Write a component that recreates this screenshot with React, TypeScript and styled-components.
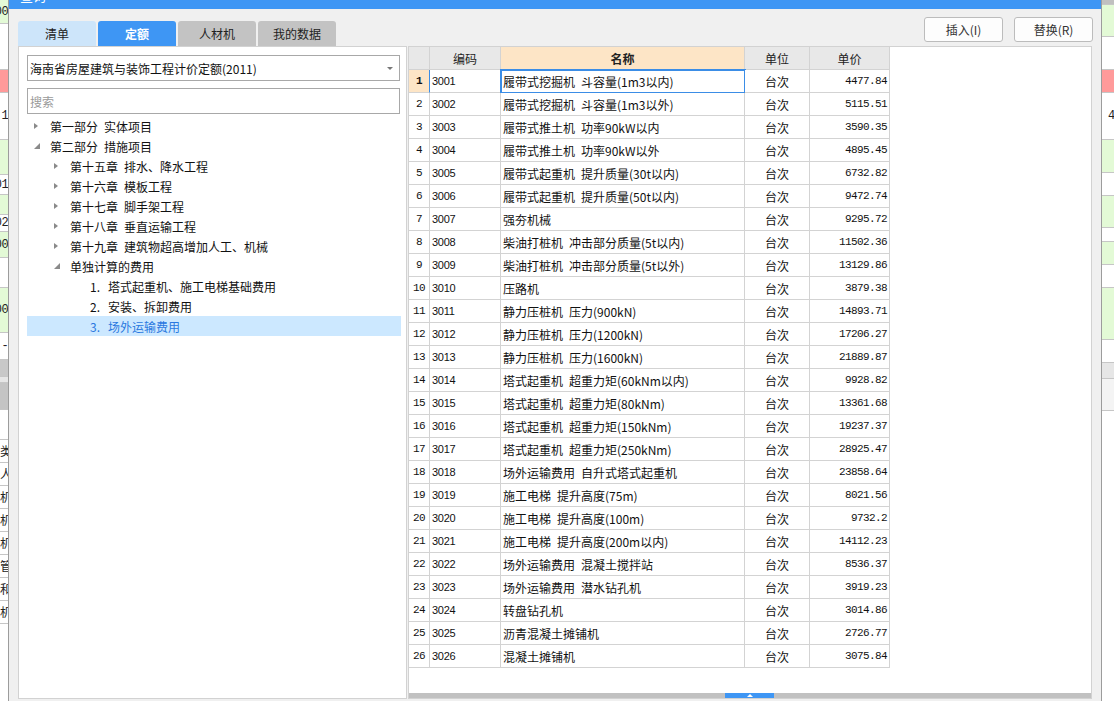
import React from 'react';
import styled, { createGlobalStyle } from 'styled-components';

const CJK = `"Noto Sans CJK SC", "Microsoft YaHei", sans-serif`;
const BLUE = '#3e96f4';

const GlobalStyle = createGlobalStyle`
  html, body { margin: 0; padding: 0; background: #f0f0f0; overflow: hidden; }
  * { box-sizing: border-box; }
`;

const Screen = styled.div`
  width: 1114px;
  height: 701px;
  display: flex;
  overflow: hidden;
  font-family: ${CJK};
  font-size: 12px;
  color: #1a1a1a;
`;

/* ---------- background window strips ---------- */
const BackStrip = styled.div<{ $w: number }>`
  width: ${p => p.$w}px;
  flex: none;
  display: flex;
  flex-direction: column;
  background: #fff;
  overflow: hidden;
`;

const BackCell = styled.div<{ $h: number; $bg: string; $side: 'left' | 'right'; $pad?: number }>`
  height: ${p => p.$h}px;
  flex: none;
  background: ${p => p.$bg};
  border-bottom: 1px solid #c6c6c6;
  display: flex;
  align-items: center;
  justify-content: ${p => (p.$side === 'right' ? 'flex-end' : 'flex-start')};
  padding-left: ${p => p.$pad ?? 0}px;
  font-family: "Liberation Mono", ${CJK};
  font-size: 12px;
  letter-spacing: -0.6px;
  white-space: nowrap;
  overflow: hidden;
  color: #222;
`;

type Seg = { h: number; bg: string; t?: string };
const G = '#e3fad6';
const W = '#ffffff';
const R = '#ff9a9a';

const leftSegs: Seg[] = [
  { h: 24, bg: G, t: '00' },
  { h: 46, bg: W },
  { h: 23, bg: R },
  { h: 47, bg: W, t: '1' },
  { h: 35, bg: G },
  { h: 20, bg: W, t: '01' },
  { h: 20, bg: G },
  { h: 17, bg: W, t: '02' },
  { h: 26, bg: G, t: '00' },
  { h: 30, bg: W },
  { h: 45, bg: G, t: '00' },
  { h: 27, bg: W, t: '-' },
  { h: 17, bg: '#c8c8c8' },
  { h: 6, bg: '#e6e6e6' },
  { h: 27, bg: '#c4c4c4' },
  { h: 30, bg: W },
];
const leftChars = ['类', '人', '机', '机', '机', '管', '和', '机'];

const rightSegs: Seg[] = [
  { h: 5, bg: '#c0c0c0' },
  { h: 32, bg: G },
  { h: 33, bg: W },
  { h: 23, bg: R },
  { h: 47, bg: W, t: '4' },
  { h: 33, bg: G },
  { h: 23, bg: W },
  { h: 32, bg: G },
  { h: 14, bg: W },
  { h: 23, bg: G },
  { h: 23, bg: W },
  { h: 52, bg: G },
  { h: 23, bg: W },
  { h: 16, bg: '#e6e6e6' },
  { h: 32, bg: '#f4f4f4' },
];

/* ---------- dialog ---------- */
const Dialog = styled.div`
  width: 1094px;
  flex: none;
  display: flex;
  flex-direction: column;
  background: #f0f0f0;
  border-left: 1px solid #9c9c9c;
  border-right: 1px solid #9c9c9c;
`;

const TitleBar = styled.div`
  height: 9px;
  flex: none;
  background: ${BLUE};
  overflow: hidden;
  padding-left: 11px;
`;

const TitleText = styled.div`
  color: #fff;
  font-size: 13px;
  line-height: 13px;
  margin-top: -11px;
`;

const Body = styled.div`
  flex: 1;
  min-height: 0;
  display: flex;
  flex-direction: column;
  padding: 8px 9px 2px 9px;
`;

const TopRow = styled.div`
  height: 29px;
  flex: none;
  display: flex;
  justify-content: space-between;
`;

const Tabs = styled.div`
  display: flex;
  gap: 2px;
  align-self: flex-end;
`;

const Tab = styled.div<{ $state: 'light' | 'active' | 'idle' }>`
  width: 78px;
  height: 25px;
  border-radius: 3px 3px 0 0;
  display: flex;
  align-items: center;
  justify-content: center;
  font-size: 12px;
  background: ${p => (p.$state === 'active' ? BLUE : p.$state === 'light' ? '#cde5fa' : '#c3c3c3')};
  color: ${p => (p.$state === 'active' ? '#fff' : '#222')};
  font-weight: ${p => (p.$state === 'active' ? 700 : 400)};
`;

const Buttons = styled.div`
  display: flex;
  gap: 11px;
  align-self: flex-start;
  margin-right: -1px;
`;

const ActionButton = styled.button`
  width: 79px;
  height: 25px;
  padding: 0;
  border: 1px solid #bcbcbc;
  border-radius: 3px;
  background: #fdfdfd;
  font-family: ${CJK};
  font-size: 12px;
  color: #333;
`;

const Panels = styled.div`
  flex: 1;
  min-height: 0;
  display: flex;
  gap: 1px;
`;

/* ---------- left panel ---------- */
const LeftPanel = styled.div`
  width: 389px;
  flex: none;
  background: #fff;
  border: 1px solid #d2d2d2;
  padding: 8px 0 0 8px;
  display: flex;
  flex-direction: column;
`;

const Combo = styled.div`
  width: 373px;
  height: 26px;
  border: 1px solid #a8a8a8;
  background: #fff;
  display: flex;
  align-items: center;
  justify-content: space-between;
  padding: 0 6px 0 2px;
  color: #111;
`;

const ComboArrow = styled.span`
  width: 0;
  height: 0;
  border-top: 3px solid #777;
  border-left: 3px solid transparent;
  border-right: 3px solid transparent;
`;

const SearchBox = styled.div`
  width: 373px;
  height: 26px;
  margin-top: 7px;
  border: 1px solid #a8a8a8;
  background: #fff;
  display: flex;
  align-items: center;
  padding-left: 2px;
  color: #9a9a9a;
`;

const Tree = styled.div`
  margin-top: 2px;
  width: 374px;
  display: flex;
  flex-direction: column;
`;

const TreeRow = styled.div<{ $level: number; $selected?: boolean }>`
  height: 20px;
  display: flex;
  align-items: center;
  padding-left: ${p => p.$level * 20}px;
  background: ${p => (p.$selected ? '#cce8ff' : 'transparent')};
  color: ${p => (p.$selected ? '#2a78e0' : '#111')};
  white-space: nowrap;
`;

const ArrowCell = styled.span`
  width: 23px;
  flex: none;
  display: flex;
  align-items: center;
  padding-left: 7px;
`;

const ClosedArrow = styled.span`
  width: 0;
  height: 0;
  border-left: 4px solid #8a8a8a;
  border-top: 3.5px solid transparent;
  border-bottom: 3.5px solid transparent;
`;

const ItemNum = styled.span`
  width: 18px;
  flex: none;
`;

/* ---------- right panel / grid ---------- */
const RightPanel = styled.div`
  flex: 1;
  min-width: 0;
  background: #fff;
  border: 1px solid #d2d2d2;
  display: flex;
  flex-direction: column;
  overflow: hidden;
`;

const Grid = styled.div`
  display: grid;
  grid-template-columns: 21px 71px 244px 65px 80px;
  width: 481px;
  flex: none;
`;

const HeadCell = styled.div<{ $accent?: boolean }>`
  height: 23px;
  border-right: 1px solid #d3d3d3;
  border-bottom: 1px solid #d3d3d3;
  background: ${p => (p.$accent ? '#fde5c6' : '#e8e8e8')};
  font-weight: ${p => (p.$accent ? 700 : 400)};
  display: flex;
  align-items: center;
  justify-content: center;
  color: #222;
`;

type Kind = 'num' | 'code' | 'name' | 'unit' | 'price';

const Cell = styled.div<{ $kind: Kind; $current?: boolean; $focus?: boolean }>`
  height: 23px;
  border-right: 1px solid ${p => (p.$current ? '#3b8de6' : '#d3d3d3')};
  border-bottom: 1px solid #d3d3d3;
  background: ${p => (p.$current ? '#fde5c6' : '#fff')};
  display: flex;
  align-items: center;
  white-space: nowrap;
  overflow: visible;
  justify-content: ${p =>
    p.$kind === 'num' || p.$kind === 'unit' ? 'center' : p.$kind === 'price' ? 'flex-end' : 'flex-start'};
  padding: ${p => (p.$kind === 'price' ? '0 2px 0 0' : p.$kind === 'code' || p.$kind === 'name' ? '0 0 0 2px' : '0')};
  font-family: ${p =>
    p.$kind === 'price' || p.$kind === 'num'
      ? `"Liberation Mono", monospace`
      : p.$kind === 'code'
      ? `"Liberation Sans", sans-serif`
      : CJK};
  font-size: ${p => (p.$kind === 'price' || p.$kind === 'num' || p.$kind === 'code' ? '11px' : '12px')};
  letter-spacing: ${p => (p.$kind === 'price' || p.$kind === 'num' ? '-0.6px' : p.$kind === 'code' ? '-0.3px' : '0')};
  font-weight: ${p => (p.$current ? 700 : 400)};
  outline: ${p => (p.$focus ? `2px solid #3b8de6` : 'none')};
  outline-offset: -1px;
  color: #111;
`;

const Filler = styled.div`
  flex: 1;
`;

const ScrollTrack = styled.div`
  height: 5px;
  flex: none;
  background: #c1c1c1;
  display: flex;
`;

const ScrollThumb = styled.div`
  width: 49px;
  margin-left: 316px;
  background: ${BLUE};
  display: flex;
  justify-content: center;
  align-items: flex-start;
`;

const ThumbArrow = styled.span`
  margin-top: 1px;
  width: 0;
  height: 0;
  border-bottom: 3px solid #fff;
  border-left: 3px solid transparent;
  border-right: 3px solid transparent;
`;

/* ---------- data ---------- */
type TreeItem = { level: number; kind: 'closed' | 'open' | 'leaf'; text: string; num?: string; selected?: boolean };
const S = '\u2002';
const treeItems: TreeItem[] = [
  { level: 0, kind: 'closed', text: `第一部分${S}实体项目` },
  { level: 0, kind: 'open', text: `第二部分${S}措施项目` },
  { level: 1, kind: 'closed', text: `第十五章${S}排水、降水工程` },
  { level: 1, kind: 'closed', text: `第十六章${S}模板工程` },
  { level: 1, kind: 'closed', text: `第十七章${S}脚手架工程` },
  { level: 1, kind: 'closed', text: `第十八章${S}垂直运输工程` },
  { level: 1, kind: 'closed', text: `第十九章${S}建筑物超高增加人工、机械` },
  { level: 1, kind: 'open', text: '单独计算的费用' },
  { level: 2, kind: 'leaf', num: '1.', text: '塔式起重机、施工电梯基础费用' },
  { level: 2, kind: 'leaf', num: '2.', text: '安装、拆卸费用' },
  { level: 2, kind: 'leaf', num: '3.', text: '场外运输费用', selected: true },
];

const rows: [string, string, string][] = [
  ['3001', `履带式挖掘机${S}斗容量(1m3以内)`, '4477.84'],
  ['3002', `履带式挖掘机${S}斗容量(1m3以外)`, '5115.51'],
  ['3003', `履带式推土机${S}功率90kW以内`, '3590.35'],
  ['3004', `履带式推土机${S}功率90kW以外`, '4895.45'],
  ['3005', `履带式起重机${S}提升质量(30t以内)`, '6732.82'],
  ['3006', `履带式起重机${S}提升质量(50t以内)`, '9472.74'],
  ['3007', '强夯机械', '9295.72'],
  ['3008', `柴油打桩机${S}冲击部分质量(5t以内)`, '11502.36'],
  ['3009', `柴油打桩机${S}冲击部分质量(5t以外)`, '13129.86'],
  ['3010', '压路机', '3879.38'],
  ['3011', `静力压桩机${S}压力(900kN)`, '14893.71'],
  ['3012', `静力压桩机${S}压力(1200kN)`, '17206.27'],
  ['3013', `静力压桩机${S}压力(1600kN)`, '21889.87'],
  ['3014', `塔式起重机${S}超重力矩(60kNm以内)`, '9928.82'],
  ['3015', `塔式起重机${S}超重力矩(80kNm)`, '13361.68'],
  ['3016', `塔式起重机${S}超重力矩(150kNm)`, '19237.37'],
  ['3017', `塔式起重机${S}超重力矩(250kNm)`, '28925.47'],
  ['3018', `场外运输费用${S}自升式塔式起重机`, '23858.64'],
  ['3019', `施工电梯${S}提升高度(75m)`, '8021.56'],
  ['3020', `施工电梯${S}提升高度(100m)`, '9732.2'],
  ['3021', `施工电梯${S}提升高度(200m以内)`, '14112.23'],
  ['3022', `场外运输费用${S}混凝土搅拌站`, '8536.37'],
  ['3023', `场外运输费用${S}潜水钻孔机`, '3919.23'],
  ['3024', '转盘钻孔机', '3014.86'],
  ['3025', '沥青混凝土摊铺机', '2726.77'],
  ['3026', '混凝土摊铺机', '3075.84'],
];

const OpenArrow = () => (
  <svg width="6" height="6" viewBox="0 0 6 6">
    <polygon points="6,0 6,6 0,6" fill="#8a8a8a" />
  </svg>
);

export default function App() {
  return (
    <Screen>
      <GlobalStyle />
      <BackStrip $w={8}>
        {leftSegs.map((s, i) => (
          <BackCell key={i} $h={s.h} $bg={s.bg} $side="right">
            {s.t}
          </BackCell>
        ))}
        {leftChars.map((c, i) => (
          <BackCell key={'c' + i} $h={23} $bg={W} $side="left">
            {c}
          </BackCell>
        ))}
      </BackStrip>

      <Dialog>
        <TitleBar>
          <TitleText>查询</TitleText>
        </TitleBar>
        <Body>
          <TopRow>
            <Tabs>
              <Tab $state="light">清单</Tab>
              <Tab $state="active">定额</Tab>
              <Tab $state="idle">人材机</Tab>
              <Tab $state="idle">我的数据</Tab>
            </Tabs>
            <Buttons>
              <ActionButton>插入(I)</ActionButton>
              <ActionButton>替换(R)</ActionButton>
            </Buttons>
          </TopRow>

          <Panels>
            <LeftPanel>
              <Combo>
                <span>海南省房屋建筑与装饰工程计价定额(2011)</span>
                <ComboArrow />
              </Combo>
              <SearchBox>搜索</SearchBox>
              <Tree>
                {treeItems.map((t, i) => (
                  <TreeRow key={i} $level={t.level} $selected={t.selected}>
                    <ArrowCell>
                      {t.kind === 'closed' && <ClosedArrow />}
                      {t.kind === 'open' && <OpenArrow />}
                    </ArrowCell>
                    {t.num && <ItemNum>{t.num}</ItemNum>}
                    <span>{t.text}</span>
                  </TreeRow>
                ))}
              </Tree>
            </LeftPanel>

            <RightPanel>
              <Grid>
                <HeadCell />
                <HeadCell>编码</HeadCell>
                <HeadCell $accent>名称</HeadCell>
                <HeadCell>单位</HeadCell>
                <HeadCell>单价</HeadCell>
                {rows.map(([code, name, price], i) => (
                  <React.Fragment key={code}>
                    <Cell $kind="num" $current={i === 0}>{i + 1}</Cell>
                    <Cell $kind="code">{code}</Cell>
                    <Cell $kind="name" $focus={i === 0}>{name}</Cell>
                    <Cell $kind="unit">台次</Cell>
                    <Cell $kind="price">{price}</Cell>
                  </React.Fragment>
                ))}
              </Grid>
              <Filler />
              <ScrollTrack>
                <ScrollThumb>
                  <ThumbArrow />
                </ScrollThumb>
              </ScrollTrack>
            </RightPanel>
          </Panels>
        </Body>
      </Dialog>

      <BackStrip $w={12}>
        {rightSegs.map((s, i) => (
          <BackCell key={i} $h={s.h} $bg={s.bg} $side="left" $pad={6}>
            {s.t}
          </BackCell>
        ))}
      </BackStrip>
    </Screen>
  );
}
